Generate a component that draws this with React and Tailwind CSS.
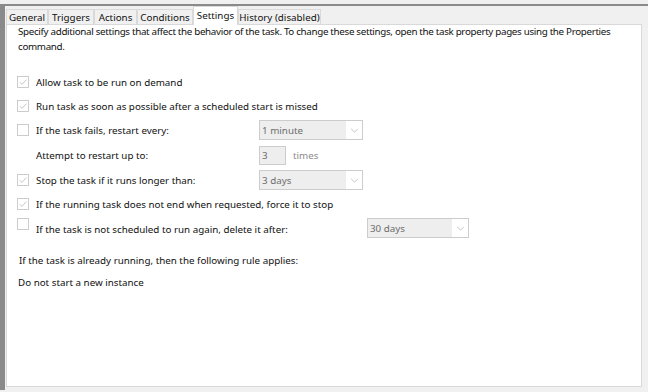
import React from 'react';

const font = { fontFamily: '"Segoe UI", "Noto Sans", "Open Sans", sans-serif' };

// small disabled checkbox, checked or empty
const Check = ({ checked, className = '' }) => (
    <span className={`flex h-[12px] w-[12px] shrink-0 items-center justify-center border border-[#cccccc] bg-white ${className}`}>
        {checked && (
            <svg viewBox="0 0 12 12" className="h-[10px] w-[10px]">
                <path d="M2 6.2 L4.8 8.8 L10 3.2" fill="none" stroke="#bcbcbc" strokeWidth="1" />
            </svg>
        )}
    </span>
);

const Combo = ({ value, width = 'w-[104px]' }) => (
    <div className={`flex h-[20px] ${width} items-center border border-[#cccccc] bg-white`}>
        <div className="flex h-full flex-1 items-center bg-[#eeeeee] pl-[2px] text-[#6d6d6d]">{value}</div>
        <div className="flex h-full w-[16px] items-center justify-center">
            <svg viewBox="0 0 10 6" className="h-[5px] w-[9px]">
                <path d="M1 1 L5 5 L9 1" fill="none" stroke="#b8b8b8" strokeWidth="1" />
            </svg>
        </div>
    </div>
);

const tabs = [
    { name: 'General', w: 'w-[42px]' },
    { name: 'Triggers', w: 'w-[46px]' },
    { name: 'Actions', w: 'w-[43px]' },
    { name: 'Conditions', w: 'w-[56px]' },
    { name: 'Settings', w: 'w-[45px]' },
    { name: 'History (disabled)', w: 'w-[83px]' },
];

const Row = ({ checked, label, children }) => (
    <div className="flex h-[24px] items-center">
        <Check checked={checked} />
        <span className="ml-[7px] w-[223px] whitespace-nowrap">{label}</span>
        {children}
    </div>
);

export default function App() {
    return (
        <div className="h-[392px] w-[648px] overflow-hidden bg-[#f0f0f0] text-[9.8px] leading-[15px] text-[#111111]" style={font}>
            <div className="h-[4px]" />
            <div className="flex h-[386px] border-t-2 border-l-[5px] border-[#8a8a8a] pr-[6px]">
                <div className="flex flex-1 flex-col pb-[3px] pl-[1px]">
                    {/* tab strip */}
                    <div className="flex h-[18px] items-end">
                        {tabs.map((t) => (
                            t.name === 'Settings' ? (
                                <div key={t.name} className={`relative -mb-px flex h-[19px] ${t.w} items-center justify-center border border-b-0 border-[#d9d9d9] bg-white pb-[2px]`}>{t.name}</div>
                            ) : (
                                <div key={t.name} className={`flex h-[15px] ${t.w} items-center justify-center border border-b-0 border-[#d9d9d9] bg-[#f0f0f0]`}>{t.name}</div>
                            )
                        ))}
                    </div>
                    {/* settings page */}
                    <div className="flex flex-1 flex-col border border-[#d9d9d9] bg-white pl-[10px]">
                        <p className="-mt-[1px] whitespace-nowrap pl-[1px] tracking-[-0.32px]">
                            Specify additional settings that affect the behavior of the task. To change these settings, open the task property pages using the Properties
                            <br />
                            command.
                        </p>
                        <div className="mt-[16px] flex flex-col">
                            <Row checked label="Allow task to be run on demand" />
                            <Row checked label="Run task as soon as possible after a scheduled start is missed" />
                            <Row label="If the task fails, restart every:">
                                <Combo value="1 minute" />
                            </Row>
                            <div className="flex h-[26px] items-center">
                                <span className="ml-[19px] w-[223px]">Attempt to restart up to:</span>
                                <div className="flex h-[19px] w-[27px] items-center border border-[#cccccc] bg-[#eeeeee] pl-[2px] text-[#6d6d6d]">3</div>
                                <span className="ml-[7px] text-[#8c8c8c]">times</span>
                            </div>
                            <Row checked label="Stop the task if it runs longer than:">
                                <Combo value="3 days" />
                            </Row>
                            <Row checked label="If the running task does not end when requested, force it to stop" />
                            <div className="flex h-[26px] items-start pt-[2px]">
                                <Check />
                                <span className="ml-[7px] mt-[4px] w-[331px] whitespace-nowrap">If the task is not scheduled to run again, delete it after:</span>
                                <Combo value="30 days" width="w-[102px]" />
                            </div>
                        </div>
                        <p className="mt-[11px] pl-[2px]">If the task is already running, then the following rule applies:</p>
                        <p className="mt-[7px] pl-[1px]">Do not start a new instance</p>
                    </div>
                </div>
            </div>
        </div>
    );
}
